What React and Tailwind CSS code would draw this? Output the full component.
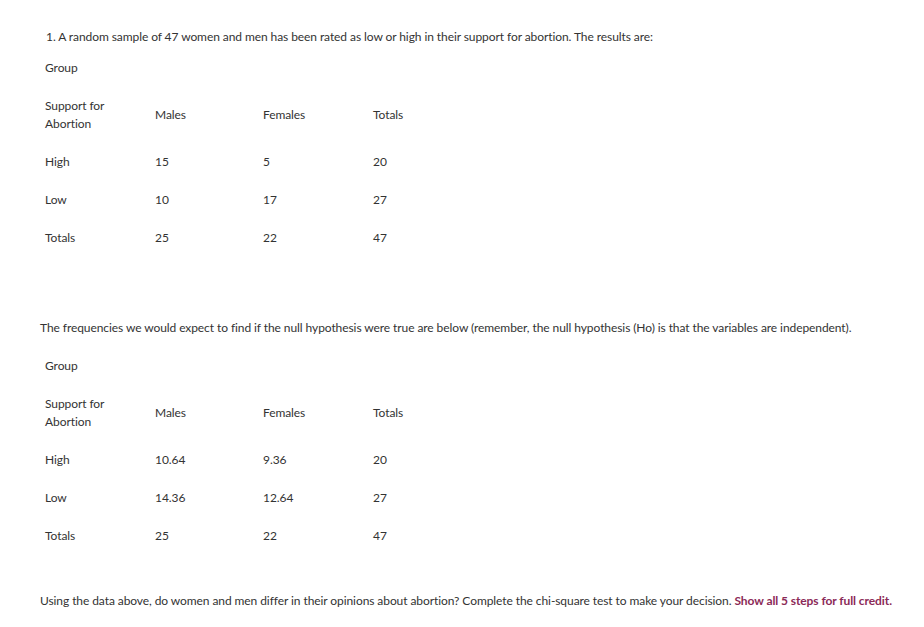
import React from 'react';

const observed = [
  ['High', '15', '5', '20'],
  ['Low', '10', '17', '27'],
  ['Totals', '25', '22', '47'],
];

const expected = [
  ['High', '10.64', '9.36', '20'],
  ['Low', '14.36', '12.64', '27'],
  ['Totals', '25', '22', '47'],
];

const FreqTable = ({ rows }) => (
  <table className="border-collapse text-[12px] leading-[18px]">
    <tbody>
      <tr>
        <td className="w-[110px] py-[10px] align-middle">Support for<br />Abortion</td>
        <td className="w-[108px] py-[10px] align-middle">Males</td>
        <td className="w-[110px] py-[10px] align-middle">Females</td>
        <td className="w-[80px] py-[10px] align-middle">Totals</td>
      </tr>
      {rows.map((r) => (
        <tr key={r[0]}>
          {r.map((c, i) => (
            <td key={i} className="py-[10px] align-middle">{c}</td>
          ))}
        </tr>
      ))}
    </tbody>
  </table>
);

const App = () => {
  return (
    <div className="w-[924px] h-[627px] bg-white text-[#333] font-['Lato','Liberation_Sans',sans-serif] text-[12px] leading-[18px] tracking-[-0.08px]">
      <div className="pt-[28px] pl-[40px]">
        <p className="pl-[6px]">1. A random sample of 47 women and men has been rated as low or high in their support for abortion. The results are:</p>
        <div className="pl-[5px]">
          <p className="mt-[13px]">Group</p>
          <div className="mt-[10px]">
            <FreqTable rows={observed} />
          </div>
        </div>

        <p className="mt-[62px]">The frequencies we would expect to find if the null hypothesis were true are below (remember, the null hypothesis (Ho) is that the variables are independent).</p>
        <div className="pl-[5px]">
          <p className="mt-[20px]">Group</p>
          <div className="mt-[10px]">
            <FreqTable rows={expected} />
          </div>
        </div>

        <p className="mt-[37px]">
          Using the data above, do women and men differ in their opinions about abortion? Complete the chi-square test to make your decision.{' '}
          <span className="font-bold text-[#8b2a57]">Show all 5 steps for full credit.</span>
        </p>
      </div>
    </div>
  );
};

export default App;
